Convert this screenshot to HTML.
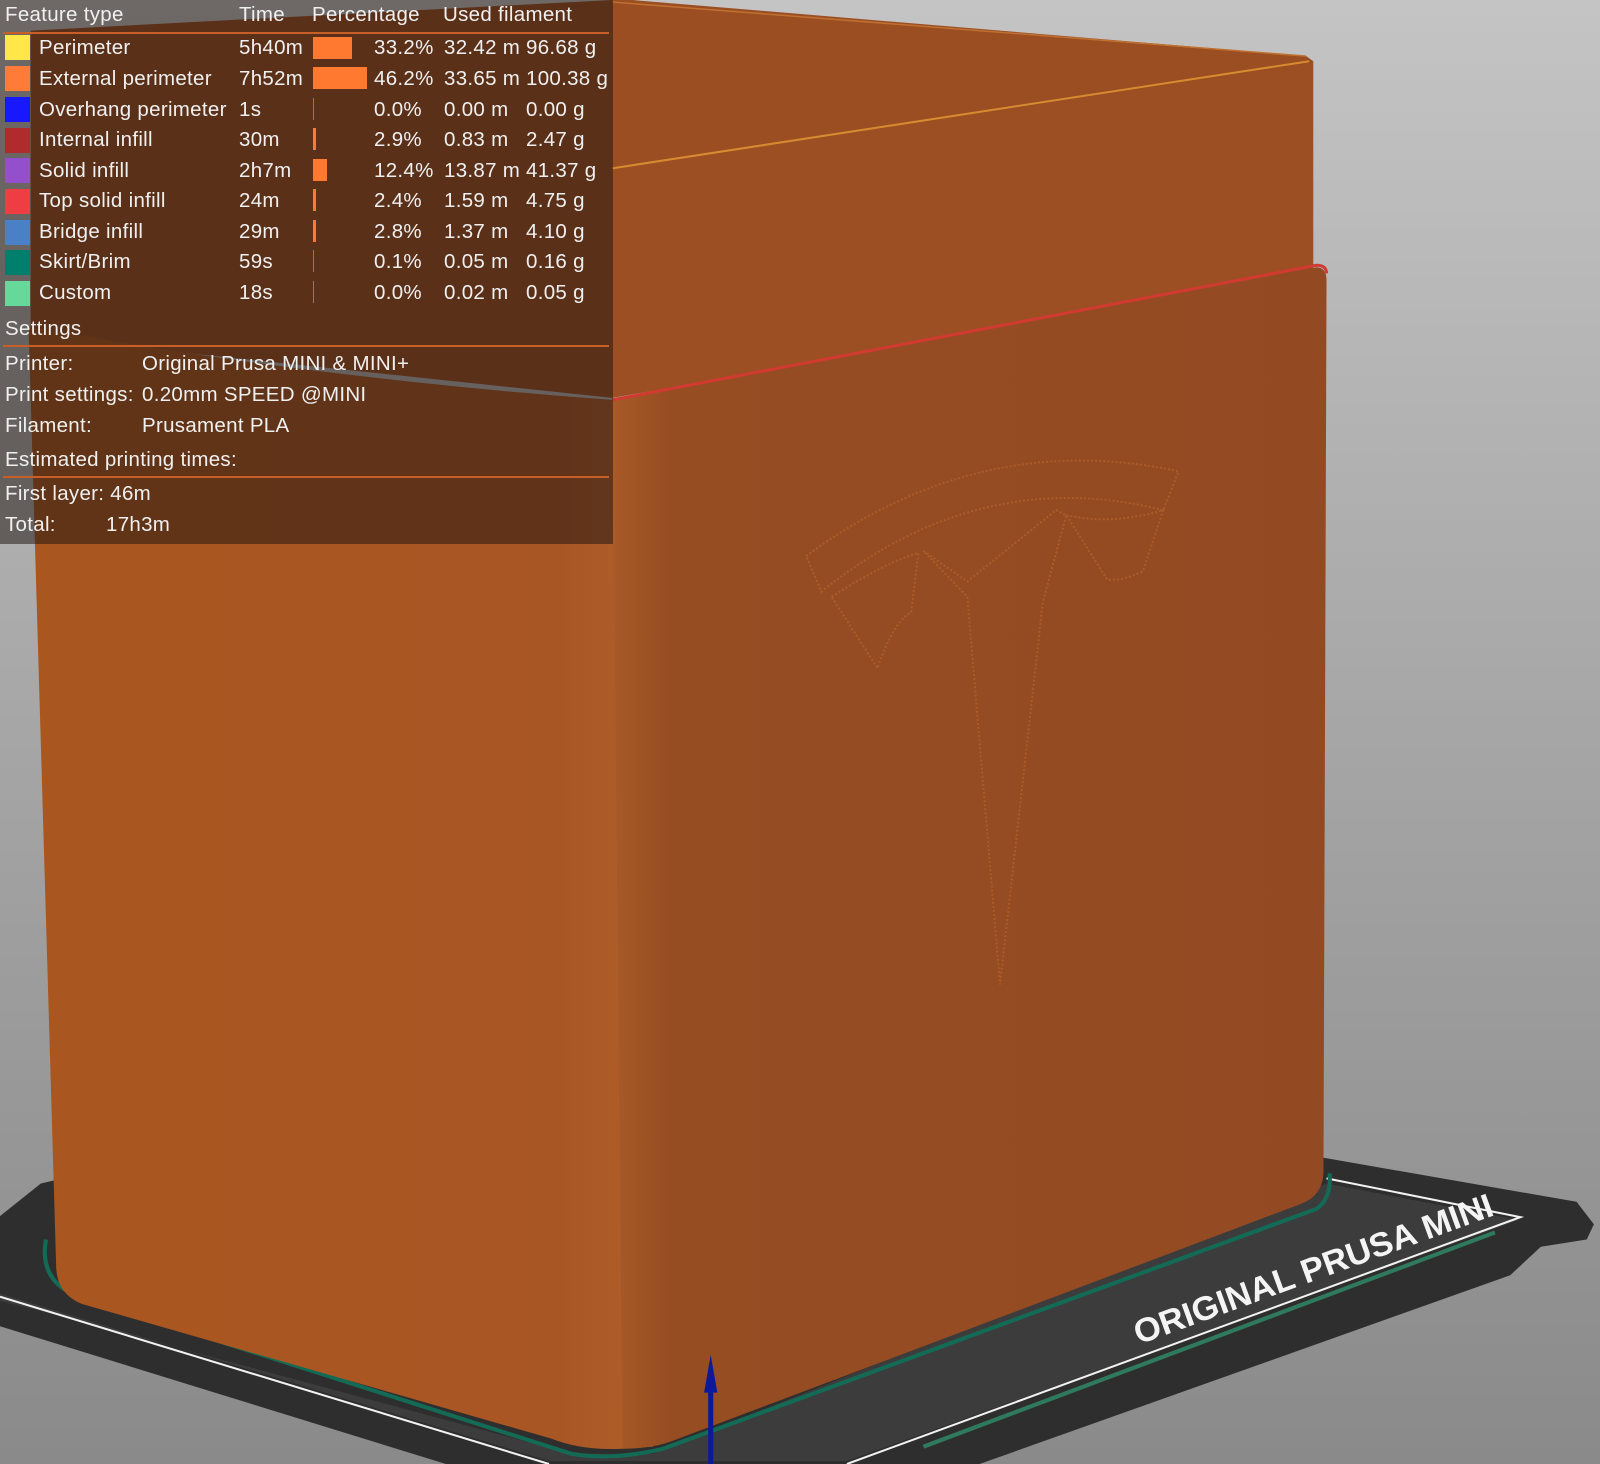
<!DOCTYPE html>
<html><head><meta charset="utf-8"><style>
html,body{margin:0;padding:0}
body{width:1600px;height:1464px;position:relative;overflow:hidden;background:#999;font-family:"Liberation Sans","DejaVu Sans",sans-serif}
svg{position:absolute;left:0;top:0}
#panel{position:absolute;left:0;top:0;width:613px;height:544px;background:rgba(30,22,18,0.52)}
.t{position:absolute;color:#f0f0f0;font-size:20.5px;letter-spacing:0.3px;white-space:nowrap;line-height:24px}
.sw{position:absolute;left:5px;width:25px;height:25px}
.bar{position:absolute;background:#ff7a30}
.hr{position:absolute;left:3px;width:606px;height:2px;background:#c85e28}
</style></head><body>
<svg width="1600" height="1464" viewBox="0 0 1568 1435" preserveAspectRatio="none">
<defs>
<linearGradient id="bg" x1="0" y1="0" x2="0" y2="1"><stop offset="0" stop-color="#c4c4c4"/><stop offset="0.5" stop-color="#a6a6a6"/><stop offset="1" stop-color="#8a8a8a"/></linearGradient>
<linearGradient id="lf" x1="0" y1="0" x2="1" y2="0"><stop offset="0" stop-color="#a9561f"/><stop offset="0.85" stop-color="#a95625"/><stop offset="1" stop-color="#b0602a"/></linearGradient>
<linearGradient id="rf" x1="0" y1="0" x2="1" y2="0"><stop offset="0" stop-color="#a85a28"/><stop offset="0.08" stop-color="#974d22"/><stop offset="1" stop-color="#934a22"/></linearGradient>
</defs>
<rect width="1568" height="1435" fill="url(#bg)"/>
<polygon points="0,1192 40,1160 53,1157 60,1150 1298,1135 1545,1178 1562,1200 1555,1215 1510,1222 1480,1250 960,1435 437,1435 0,1300" fill="#2e2e2e"/>
<polygon points="0,1275 40,1285 560,1425 640,1425 1300,1160 1488,1196 830,1432 538,1432 0,1268" fill="#3c3c3c"/>
<polyline points="0,1271 538,1435" stroke="#f2f2f2" stroke-width="2" fill="none"/>
<polyline points="1300,1155 1490,1193 830,1435" stroke="#f2f2f2" stroke-width="2" fill="none"/>
<polyline points="905,1418 1465,1208" stroke="#2f7a5e" stroke-width="4" fill="none"/>
<path d="M45,1215 Q38,1255 75,1270 L560,1425 Q600,1432 650,1420 L1290,1185 Q1305,1175 1303,1150" stroke="#136b55" stroke-width="4" fill="none"/>
<text x="1116" y="1318" transform="rotate(-20 1116 1318)" fill="#f4f4f4" font-family="Liberation Sans" font-weight="bold" font-size="33" textLength="372" lengthAdjust="spacingAndGlyphs">ORIGINAL PRUSA MINI</text>
<polygon points="30,330 30,30 600,0 620,0 1280,55 1287,60 1287,270 600,390" fill="#9c4f22"/>
<polygon points="600,0 1280,55 1287,62 600,165" fill="#9a4e21"/>
<polyline points="600,165 1283,60" stroke="#d88a30" stroke-width="2" fill="none"/>
<polyline points="600,2 1280,55" stroke="#c07030" stroke-width="1.5" fill="none"/>
<path d="M28,320 Q300,370 600,392 L640,392 L640,1418 L610,1420 Q570,1422 540,1410 L80,1278 Q55,1268 55,1240 Z" fill="url(#lf)"/>
<path d="M600,392 L1290,262 Q1300,262 1300,275 L1297,1150 Q1296,1172 1275,1180 L660,1412 Q640,1420 610,1420 Z" fill="url(#rf)"/>
<path d="M600,392 L1290,260 Q1300,260 1300,268" stroke="#d03a30" stroke-width="3" fill="none"/>
<g stroke="#b8662f" stroke-width="2" fill="none" stroke-dasharray="2 2" opacity="0.6">
<path d="M790,545 Q960,420 1155,462 L1140,500 Q960,455 805,580 Z"/>
<path d="M815,585 Q870,550 900,542 L893,600 Q875,610 860,655 Z"/>
<path d="M1045,505 Q1090,515 1140,500 L1120,560 Q1100,570 1085,568 Z"/>
<path d="M905,540 L948,570 L1035,500 L1045,505 L1022,590 L980,965 L948,585 Z"/>
</g>
<rect x="694" y="1355" width="5" height="80" fill="#0c1a9a"/>
<polygon points="696.5,1328 690,1365 703,1365" fill="#0c1a9a"/>
</svg>
<div id="panel"></div>
<div class="hr" style="top:32px"></div>
<div class="hr" style="top:345px"></div>
<div class="hr" style="top:476px"></div>
<div class="t" style="left:5px;top:3px">Feature type</div>
<div class="t" style="left:239px;top:3px">Time</div>
<div class="t" style="left:312px;top:3px">Percentage</div>
<div class="t" style="left:443px;top:3px">Used filament</div>

<div class="sw" style="top:35px;background:#ffe74a"></div>
<div class="sw" style="top:66px;background:#ff7c38"></div>
<div class="sw" style="top:97px;background:#1818ff"></div>
<div class="sw" style="top:128px;background:#b02b2b"></div>
<div class="sw" style="top:158px;background:#9450cc"></div>
<div class="sw" style="top:189px;background:#ef3d44"></div>
<div class="sw" style="top:220px;background:#4a80c6"></div>
<div class="sw" style="top:250px;background:#00806c"></div>
<div class="sw" style="top:281px;background:#66d89a"></div>

<div class="bar" style="left:313px;top:37px;width:39px;height:22px"></div>
<div class="bar" style="left:313px;top:67px;width:54px;height:22px"></div>
<div class="bar" style="left:313px;top:98px;width:1px;height:22px;opacity:.7"></div>
<div class="bar" style="left:313px;top:128px;width:3px;height:22px"></div>
<div class="bar" style="left:313px;top:159px;width:14px;height:22px"></div>
<div class="bar" style="left:313px;top:189px;width:3px;height:22px"></div>
<div class="bar" style="left:313px;top:220px;width:3px;height:22px"></div>
<div class="bar" style="left:313px;top:250px;width:1px;height:22px;opacity:.7"></div>
<div class="bar" style="left:313px;top:281px;width:1px;height:22px;opacity:.7"></div>

<div class="t" style="left:39px;top:36px">Perimeter</div><div class="t" style="left:239px;top:36px">5h40m</div><div class="t" style="left:374px;top:36px">33.2%</div><div class="t" style="left:444px;top:36px">32.42 m</div><div class="t" style="left:526px;top:36px">96.68 g</div>
<div class="t" style="left:39px;top:67px">External perimeter</div><div class="t" style="left:239px;top:67px">7h52m</div><div class="t" style="left:374px;top:67px">46.2%</div><div class="t" style="left:444px;top:67px">33.65 m</div><div class="t" style="left:526px;top:67px">100.38 g</div>
<div class="t" style="left:39px;top:98px">Overhang perimeter</div><div class="t" style="left:239px;top:98px">1s</div><div class="t" style="left:374px;top:98px">0.0%</div><div class="t" style="left:444px;top:98px">0.00 m</div><div class="t" style="left:526px;top:98px">0.00 g</div>
<div class="t" style="left:39px;top:128px">Internal infill</div><div class="t" style="left:239px;top:128px">30m</div><div class="t" style="left:374px;top:128px">2.9%</div><div class="t" style="left:444px;top:128px">0.83 m</div><div class="t" style="left:526px;top:128px">2.47 g</div>
<div class="t" style="left:39px;top:159px">Solid infill</div><div class="t" style="left:239px;top:159px">2h7m</div><div class="t" style="left:374px;top:159px">12.4%</div><div class="t" style="left:444px;top:159px">13.87 m</div><div class="t" style="left:526px;top:159px">41.37 g</div>
<div class="t" style="left:39px;top:189px">Top solid infill</div><div class="t" style="left:239px;top:189px">24m</div><div class="t" style="left:374px;top:189px">2.4%</div><div class="t" style="left:444px;top:189px">1.59 m</div><div class="t" style="left:526px;top:189px">4.75 g</div>
<div class="t" style="left:39px;top:220px">Bridge infill</div><div class="t" style="left:239px;top:220px">29m</div><div class="t" style="left:374px;top:220px">2.8%</div><div class="t" style="left:444px;top:220px">1.37 m</div><div class="t" style="left:526px;top:220px">4.10 g</div>
<div class="t" style="left:39px;top:250px">Skirt/Brim</div><div class="t" style="left:239px;top:250px">59s</div><div class="t" style="left:374px;top:250px">0.1%</div><div class="t" style="left:444px;top:250px">0.05 m</div><div class="t" style="left:526px;top:250px">0.16 g</div>
<div class="t" style="left:39px;top:281px">Custom</div><div class="t" style="left:239px;top:281px">18s</div><div class="t" style="left:374px;top:281px">0.0%</div><div class="t" style="left:444px;top:281px">0.02 m</div><div class="t" style="left:526px;top:281px">0.05 g</div>

<div class="t" style="left:5px;top:317px">Settings</div>
<div class="t" style="left:5px;top:352px">Printer:</div><div class="t" style="left:142px;top:352px">Original Prusa MINI &amp; MINI+</div>
<div class="t" style="left:5px;top:383px">Print settings:</div><div class="t" style="left:142px;top:383px">0.20mm SPEED @MINI</div>
<div class="t" style="left:5px;top:414px">Filament:</div><div class="t" style="left:142px;top:414px">Prusament PLA</div>
<div class="t" style="left:5px;top:448px">Estimated printing times:</div>
<div class="t" style="left:5px;top:482px">First layer: 46m</div>
<div class="t" style="left:5px;top:513px">Total:</div><div class="t" style="left:106px;top:513px">17h3m</div>
</body></html>
